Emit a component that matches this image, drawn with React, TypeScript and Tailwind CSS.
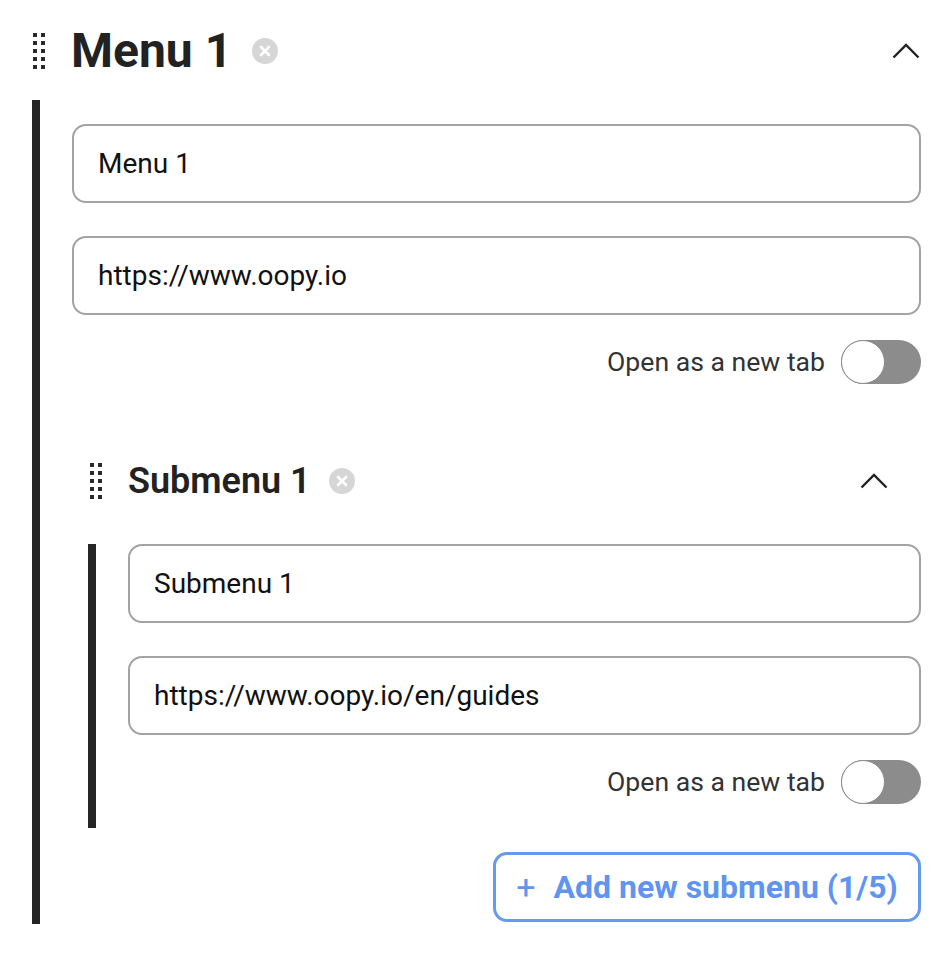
import React from "react";

function DragHandle() {
  return (
    <div className="grid grid-cols-2 gap-[4px] w-[12px]">
      {Array.from({ length: 10 }).map((_, i) => (
        <span key={i} className="block w-[4px] h-[4px] bg-[#2a2a2a]" />
      ))}
    </div>
  );
}

function ClearIcon() {
  return (
    <svg width="26" height="26" viewBox="0 0 26 26">
      <circle cx="13" cy="13" r="13" fill="#d6d6d6" />
      <path d="M9 9 L17 17 M17 9 L9 17" stroke="#fff" strokeWidth="2.6" strokeLinecap="round" />
    </svg>
  );
}

function ChevronUp() {
  return (
    <svg width="28" height="16" viewBox="0 0 28 16">
      <path d="M1.5 14.5 L14 2 L26.5 14.5" fill="none" stroke="#222" strokeWidth="2.4" />
    </svg>
  );
}

function Field({ value }: { value: string }) {
  return (
    <div className="h-[79px] rounded-[14px] border-2 border-[#a3a3a3] flex items-center px-[24px] text-[28px] text-[#111]">
      {value}
    </div>
  );
}

function NewTabToggle() {
  return (
    <div className="flex items-center justify-end gap-[16px]">
      <span className="text-[26.6px] text-[#333]">Open as a new tab</span>
      <div className="w-[80px] h-[44px] rounded-full bg-[#8c8c8c] flex items-center">
        <div className="w-[44px] h-[44px] rounded-full bg-white border-[1.5px] border-[#8c8c8c]" />
      </div>
    </div>
  );
}

export default function App() {
  return (
    <div
      className="w-[952px] h-[960px] bg-white pl-[32px] pr-[31px]"
      style={{ fontFamily: "Roboto, 'Noto Sans', sans-serif" }}
    >
      {/* Menu header */}
      <div className="flex items-center h-[68px] mt-[17px] pl-[1px]">
        <DragHandle />
        <h1 className="ml-[26px] text-[48px] font-bold text-[#222] leading-none">Menu 1</h1>
        <span className="ml-[20px] flex">
          <ClearIcon />
        </span>
        <span className="ml-auto mr-[1px] flex">
          <ChevronUp />
        </span>
      </div>

      {/* Menu body */}
      <div className="mt-[15px] flex">
        <div className="w-[8px] bg-[#262626] shrink-0" />
        <div className="flex-1 pl-[32px] pt-[24px] pb-[2px]">
          <div className="flex flex-col gap-[33px]">
            <Field value="Menu 1" />
            <Field value="https://www.oopy.io" />
          </div>
          <div className="mt-[25px]">
            <NewTabToggle />
          </div>

          {/* Submenu */}
          <div className="pl-[16px]">
            <div className="flex items-center h-[48px] mt-[73px] pl-[2px]">
              <DragHandle />
              <h2 className="ml-[26px] text-[36px] font-semibold text-[#222] leading-none">Submenu 1</h2>
              <span className="ml-[18px] flex">
                <ClearIcon />
              </span>
              <span className="ml-auto mr-[33px] flex">
                <ChevronUp />
              </span>
            </div>
            <div className="mt-[39px] flex">
              <div className="w-[8px] bg-[#262626] shrink-0" />
              <div className="flex-1 pl-[32px] pb-[24px]">
                <div className="flex flex-col gap-[33px]">
                  <Field value="Submenu 1" />
                  <Field value="https://www.oopy.io/en/guides" />
                </div>
                <div className="mt-[25px]">
                  <NewTabToggle />
                </div>
              </div>
            </div>
          </div>

          <div className="mt-[24px] flex justify-end">
            <button className="h-[70px] w-[428px] rounded-[14px] border-[3px] border-[#6699f2] flex items-center justify-center gap-[18px] text-[#5f95f0] text-[32px] font-bold">
              <span className="font-normal text-[34px] leading-none">+</span>
              <span>Add new submenu (1/5)</span>
            </button>
          </div>
        </div>
      </div>
    </div>
  );
}
